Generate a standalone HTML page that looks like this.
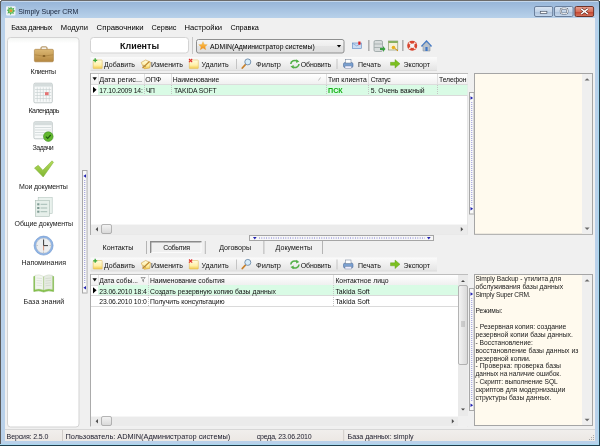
<!DOCTYPE html>
<html><head><meta charset="utf-8"><style>
html,body{margin:0;padding:0;width:600px;height:446px;overflow:hidden;background:#f0f0f0}
svg{display:block;font-family:"Liberation Sans",sans-serif;will-change:transform}
</style></head><body>
<svg width="600" height="446" viewBox="0 0 600 446">
<defs>
<linearGradient id="gTitle" x1="0" y1="0" x2="0" y2="1">
 <stop offset="0" stop-color="#94b3d7"/><stop offset="1" stop-color="#b8d1ea"/></linearGradient>
<linearGradient id="gTool" x1="0" y1="0" x2="0" y2="1">
 <stop offset="0" stop-color="#fbfbfb"/><stop offset="1" stop-color="#e4e4e4"/></linearGradient>
<linearGradient id="gHead" x1="0" y1="0" x2="0" y2="1">
 <stop offset="0" stop-color="#ffffff"/><stop offset="1" stop-color="#f0f0f0"/></linearGradient>
<linearGradient id="gBtn" x1="0" y1="0" x2="0" y2="1">
 <stop offset="0" stop-color="#dbe6f3"/><stop offset="0.5" stop-color="#c3d4e8"/><stop offset="0.5" stop-color="#a9bfd9"/><stop offset="1" stop-color="#c9daee"/></linearGradient>
<linearGradient id="gClose" x1="0" y1="0" x2="0" y2="1">
 <stop offset="0" stop-color="#e8a393"/><stop offset="0.5" stop-color="#d7705a"/><stop offset="0.5" stop-color="#c4402b"/><stop offset="1" stop-color="#d4765f"/></linearGradient>
<linearGradient id="gBrief" x1="0" y1="0" x2="0" y2="1">
 <stop offset="0" stop-color="#dcb874"/><stop offset="1" stop-color="#b5873f"/></linearGradient>
<linearGradient id="gFolder" x1="0" y1="0" x2="0" y2="1">
 <stop offset="0" stop-color="#fffce0"/><stop offset="0.6" stop-color="#fff0a8"/><stop offset="1" stop-color="#f2c848"/></linearGradient>
<linearGradient id="gThumbH" x1="0" y1="0" x2="0" y2="1">
 <stop offset="0" stop-color="#f4f4f4"/><stop offset="1" stop-color="#d8d8d8"/></linearGradient>
<linearGradient id="gThumbV" x1="0" y1="0" x2="1" y2="0">
 <stop offset="0" stop-color="#f4f4f4"/><stop offset="1" stop-color="#d8d8d8"/></linearGradient>
<linearGradient id="gCheck" x1="0" y1="0" x2="0" y2="1">
 <stop offset="0" stop-color="#b4dc5a"/><stop offset="1" stop-color="#80b632"/></linearGradient>
<linearGradient id="gCombo" x1="0" y1="0" x2="0" y2="1">
 <stop offset="0" stop-color="#f6f6f6"/><stop offset="0.5" stop-color="#ededed"/><stop offset="0.5" stop-color="#e4e4e4"/><stop offset="1" stop-color="#dedede"/></linearGradient>
<linearGradient id="gStar" x1="0" y1="0" x2="0" y2="1">
 <stop offset="0" stop-color="#ffd060"/><stop offset="1" stop-color="#f08a10"/></linearGradient>
<linearGradient id="gPanel" x1="0" y1="0" x2="0" y2="389.5" gradientUnits="userSpaceOnUse" gradientTransform="translate(0,37.5)">
 <stop offset="0" stop-color="#f3f5f3"/><stop offset="0.015" stop-color="#ffffff"/><stop offset="1" stop-color="#ffffff"/></linearGradient>
<linearGradient id="gStatus" x1="0" y1="0" x2="0" y2="1">
 <stop offset="0" stop-color="#f1efed"/><stop offset="1" stop-color="#ece8e4"/></linearGradient>
</defs>
<rect x="0" y="0" width="600" height="446" fill="#b9d1ea" stroke="none" stroke-width="1" rx="0" />
<rect x="0" y="0" width="600" height="18" fill="url(#gTitle)" stroke="none" stroke-width="1" rx="0" />
<line x1="0" y1="0.5" x2="600" y2="0.5" stroke="#6c6c6c" stroke-width="1" />
<line x1="0.5" y1="0" x2="0.5" y2="446" stroke="#5c5c5c" stroke-width="1" />
<line x1="598.5" y1="20" x2="598.5" y2="445" stroke="#a8d8f0" stroke-width="1" />
<line x1="0" y1="444.5" x2="600" y2="444.5" stroke="#a8d8f0" stroke-width="1" />
<line x1="599.5" y1="0" x2="599.5" y2="446" stroke="#28414f" stroke-width="1" />
<line x1="0" y1="445.5" x2="600" y2="445.5" stroke="#1f3d4c" stroke-width="1" />
<line x1="1" y1="1.5" x2="599" y2="1.5" stroke="#c4d7ec" stroke-width="1" />
<rect x="0" y="0" width="1" height="1" fill="#ffffff" stroke="none" stroke-width="1" rx="0" />
<rect x="599" y="0" width="1" height="1" fill="#ffffff" stroke="none" stroke-width="1" rx="0" />
<rect x="1" y="1" width="1" height="1" fill="#8a9aaa" stroke="none" stroke-width="1" rx="0" />
<rect x="598" y="1" width="1" height="1" fill="#8a9aaa" stroke="none" stroke-width="1" rx="0" />
<rect x="5" y="18" width="590" height="423" fill="#f0f0f0" stroke="none" stroke-width="1" rx="0" />
<rect x="6" y="6.2" width="9.5" height="9.2" fill="#eef3f8" stroke="none" stroke-width="1" rx="1" />
<g transform="translate(11,10.7)"><path d="M0,-4.2 L1.2,-2.3 3.4,-3 2.6,-1 4.3,0.3 2.4,1.2 2.8,3.4 0.8,2.6 -0.6,4.3 -1.4,2.4 -3.6,2.8 -2.7,0.9 -4.3,-0.6 -2.4,-1.5 -3,-3.5 -0.9,-2.6 Z" fill="#4fae52"/><circle r="2.2" fill="#8ccd6a"/><circle r="1.3" fill="#e8912e"/></g>
<text x="18.3" y="14.3" font-size="7.06" fill="#18243a" font-weight="normal" text-anchor="start" textLength="60" lengthAdjust="spacing">Simply Super CRM</text>
<rect x="534.5" y="6.5" width="18.2" height="10" fill="url(#gBtn)" stroke="#6a7f9c" stroke-width="1" rx="1.5" />
<rect x="540.3" y="11.3" width="6.6" height="2.3" fill="#fbfbfb" stroke="#4a5566" stroke-width="0.7" rx="0" />
<rect x="554.5" y="6.5" width="18.6" height="10" fill="url(#gBtn)" stroke="#6a7f9c" stroke-width="1" rx="1.5" />
<rect x="560.8" y="8.6" width="6.6" height="5" fill="none" stroke="#4a5566" stroke-width="1.9" rx="1.5" />
<rect x="560.8" y="8.6" width="6.6" height="5" fill="none" stroke="#f4f4f4" stroke-width="1" rx="1.5" />
<rect x="575" y="6.5" width="18.6" height="10" fill="url(#gClose)" stroke="#6e3228" stroke-width="1" rx="1.5" />
<path d="M581.2,8.8 L587.8,14 M587.8,8.8 L581.2,14" stroke="#5a2a22" stroke-width="2.6"/>
<path d="M581.2,8.8 L587.8,14 M587.8,8.8 L581.2,14" stroke="#fff" stroke-width="1.5"/>
<text x="11.3" y="29.8" font-size="7.3" fill="#000" font-weight="normal" text-anchor="start" textLength="41.2" lengthAdjust="spacing">База данных</text>
<text x="60.8" y="29.8" font-size="7.59" fill="#000" font-weight="normal" text-anchor="start" textLength="27.2" lengthAdjust="spacing">Модули</text>
<text x="96.6" y="29.8" font-size="7.76" fill="#000" font-weight="normal" text-anchor="start" textLength="47" lengthAdjust="spacing">Справочники</text>
<text x="151.5" y="29.8" font-size="7.3" fill="#000" font-weight="normal" text-anchor="start" textLength="25" lengthAdjust="spacing">Сервис</text>
<text x="184.6" y="29.8" font-size="7.63" fill="#000" font-weight="normal" text-anchor="start" textLength="37.4" lengthAdjust="spacing">Настройки</text>
<text x="230.5" y="29.8" font-size="7.3" fill="#000" font-weight="normal" text-anchor="start" textLength="28.3" lengthAdjust="spacing">Справка</text>
<rect x="7.5" y="37.5" width="71.5" height="389.5" fill="url(#gPanel)" stroke="#d3d3d3" stroke-width="1" rx="3" />
<g><path d="M41,49.5 v-1.6 q0,-1 1,-1 h4 q1,0 1,1 v1.6" fill="none" stroke="#9c7434" stroke-width="0.9"/><rect x="34.4" y="49.3" width="19" height="12.5" rx="1.2" fill="url(#gBrief)" stroke="#a47b3a" stroke-width="0.6"/><path d="M34.6,54.8 Q43.9,57.5 53.2,54.8" fill="none" stroke="#a27a38" stroke-width="0.6"/><rect x="42.8" y="55" width="2.4" height="2" fill="#8a6428"/></g>
<g><rect x="33.9" y="83.2" width="18.4" height="19.6" rx="1.2" fill="#f7f9f9" stroke="#aab6b6" stroke-width="0.7"/><rect x="34.3" y="83.6" width="17.6" height="3" fill="#d5dcdc"/><line x1="37.3" y1="87.5" x2="37.3" y2="101.5" stroke="#c5cece" stroke-width="0.6"/><line x1="40.3" y1="87.5" x2="40.3" y2="101.5" stroke="#c5cece" stroke-width="0.6"/><line x1="43.3" y1="87.5" x2="43.3" y2="101.5" stroke="#c5cece" stroke-width="0.6"/><line x1="46.3" y1="87.5" x2="46.3" y2="101.5" stroke="#c5cece" stroke-width="0.6"/><line x1="49.3" y1="87.5" x2="49.3" y2="101.5" stroke="#c5cece" stroke-width="0.6"/><line x1="35" y1="89.5" x2="51.2" y2="89.5" stroke="#c5cece" stroke-width="0.6"/><line x1="35" y1="92.5" x2="51.2" y2="92.5" stroke="#c5cece" stroke-width="0.6"/><line x1="35" y1="95.5" x2="51.2" y2="95.5" stroke="#c5cece" stroke-width="0.6"/><line x1="35" y1="98.5" x2="51.2" y2="98.5" stroke="#c5cece" stroke-width="0.6"/><rect x="45" y="92.2" width="3.6" height="3" fill="#e57272"/></g>
<g><rect x="33.9" y="121.8" width="18.4" height="17" rx="1.2" fill="#f7f9f9" stroke="#aab6b6" stroke-width="0.7"/><rect x="34.3" y="122.2" width="17.6" height="3" fill="#d5dcdc"/><line x1="35.5" y1="127.5" x2="50.5" y2="127.5" stroke="#8c9a9e" stroke-width="0.6" stroke-dasharray="1 1"/><line x1="35.5" y1="130.0" x2="50.5" y2="130.0" stroke="#8c9a9e" stroke-width="0.6" stroke-dasharray="1 1"/><line x1="35.5" y1="132.5" x2="50.5" y2="132.5" stroke="#8c9a9e" stroke-width="0.6" stroke-dasharray="1 1"/><line x1="35.5" y1="135.0" x2="50.5" y2="135.0" stroke="#8c9a9e" stroke-width="0.6" stroke-dasharray="1 1"/><circle cx="48.3" cy="136.6" r="4.8" fill="#62b82e" stroke="#3d8a22" stroke-width="0.6"/><path d="M45.9,136.6 l1.8,1.8 l3,-3.4" fill="none" stroke="#1f5a10" stroke-width="1.2"/></g>
<path d="M34.5,168 L38.2,165.3 L42.8,170.2 L52,160.8 L53.5,162.3 L43.2,177 Z" fill="url(#gCheck)" stroke="#78a830" stroke-width="0.5" stroke-linejoin="round"/>
<g><rect x="38.2" y="197.6" width="14" height="15.8" fill="#eaf2ee" stroke="#b4c6bf" stroke-width="0.6"/><rect x="35.3" y="200.3" width="14.2" height="16" fill="#e6efea" stroke="#aabdb5" stroke-width="0.6"/><rect x="37.2" y="203.3" width="2.2" height="2" fill="#7d9a92"/><line x1="40.6" y1="204.3" x2="47.2" y2="204.3" stroke="#8aa69e" stroke-width="0.7"/><rect x="37.2" y="207.0" width="2.2" height="2" fill="#7d9a92"/><line x1="40.6" y1="208.0" x2="47.2" y2="208.0" stroke="#8aa69e" stroke-width="0.7"/><rect x="37.2" y="210.70000000000002" width="2.2" height="2" fill="#7d9a92"/><line x1="40.6" y1="211.70000000000002" x2="47.2" y2="211.70000000000002" stroke="#8aa69e" stroke-width="0.7"/></g>
<g><circle cx="43.6" cy="245.6" r="9.5" fill="#8fb4e6" stroke="#6a94cc" stroke-width="0.6"/><circle cx="43.6" cy="245.6" r="7.6" fill="#eceef0" stroke="#a8b0b8" stroke-width="0.4"/><path d="M43.6,239.5 V245.6 H48" fill="none" stroke="#222" stroke-width="0.9"/><line x1="43.6" y1="245.6" x2="43.6" y2="250.5" stroke="#c0502a" stroke-width="0.6"/><g fill="#888"><rect x="43.3" y="238.6" width="0.6" height="1"/><rect x="43.3" y="251.6" width="0.6" height="1"/><rect x="36.6" y="245.3" width="1" height="0.6"/><rect x="49.6" y="245.3" width="1" height="0.6"/></g></g>
<g><path d="M33.8,276.5 Q38.8,274.8 43.7,277 Q48.6,274.8 53.6,276.5 V291.5 Q48.6,290 43.7,292 Q38.8,290 33.8,291.5 Z" fill="#86c24a" stroke="#6aa838" stroke-width="0.5"/><path d="M35,275.3 Q39.3,273.8 43.4,276.3 V290 Q39.3,288.3 35,289.4 Z" fill="#f2f5ef" stroke="#c8d4bc" stroke-width="0.4"/><path d="M52.4,275.3 Q48.1,273.8 44,276.3 V290 Q48.1,288.3 52.4,289.4 Z" fill="#e6ebe2" stroke="#c8d4bc" stroke-width="0.4"/><line x1="36.5" y1="278.0" x2="42" y2="278.6" stroke="#cdd6c6" stroke-width="0.5"/><line x1="45.4" y1="278.6" x2="51" y2="278.0" stroke="#c4cdbc" stroke-width="0.5"/><line x1="36.5" y1="280.4" x2="42" y2="281.0" stroke="#cdd6c6" stroke-width="0.5"/><line x1="45.4" y1="281.0" x2="51" y2="280.4" stroke="#c4cdbc" stroke-width="0.5"/><line x1="36.5" y1="282.8" x2="42" y2="283.40000000000003" stroke="#cdd6c6" stroke-width="0.5"/><line x1="45.4" y1="283.40000000000003" x2="51" y2="282.8" stroke="#c4cdbc" stroke-width="0.5"/><line x1="36.5" y1="285.2" x2="42" y2="285.8" stroke="#cdd6c6" stroke-width="0.5"/><line x1="45.4" y1="285.8" x2="51" y2="285.2" stroke="#c4cdbc" stroke-width="0.5"/></g>
<text x="30.6" y="73.5" font-size="7.0" fill="#1a1a1a" font-weight="normal" text-anchor="start" textLength="25.4" lengthAdjust="spacing">Клиенты</text>
<text x="28.5" y="112.8" font-size="7.0" fill="#1a1a1a" font-weight="normal" text-anchor="start" textLength="31" lengthAdjust="spacing">Календарь</text>
<text x="32.6" y="150.3" font-size="7.0" fill="#1a1a1a" font-weight="normal" text-anchor="start" textLength="21" lengthAdjust="spacing">Задачи</text>
<text x="19" y="188.5" font-size="7.0" fill="#1a1a1a" font-weight="normal" text-anchor="start" textLength="48.8" lengthAdjust="spacing">Мои документы</text>
<text x="14.6" y="226" font-size="7.0" fill="#1a1a1a" font-weight="normal" text-anchor="start" textLength="58.4" lengthAdjust="spacing">Общие документы</text>
<text x="21.5" y="265" font-size="7.0" fill="#1a1a1a" font-weight="normal" text-anchor="start" textLength="44.5" lengthAdjust="spacing">Напоминания</text>
<text x="23.6" y="303.5" font-size="7.1" fill="#1a1a1a" font-weight="normal" text-anchor="start" textLength="40.7" lengthAdjust="spacing">База знаний</text>
<rect x="82.5" y="170.5" width="4.5" height="122.5" fill="#f9f9f9" stroke="#a8a8a8" stroke-width="1" rx="0" />
<line x1="86.5" y1="171" x2="86.5" y2="292.5" stroke="#d8d8d8" stroke-width="1" />
<line x1="84.75" y1="180" x2="84.75" y2="283.5" stroke="#4040c0" stroke-width="0.8" stroke-dasharray="0.7 1.3"/>
<path d="M86,174.2 l-2.6,1.8 l2.6,1.8 z" fill="#2020b0"/>
<path d="M86,285.9 l-2.6,1.8 l2.6,1.8 z" fill="#2020b0"/>
<rect x="90.5" y="37.5" width="98" height="15.5" fill="#ffffff" stroke="#d3d3d3" stroke-width="1" rx="3" />
<text x="120" y="49" font-size="8.94" fill="#111" font-weight="bold" text-anchor="start" textLength="39" lengthAdjust="spacing">Клиенты</text>
<line x1="192.5" y1="37" x2="192.5" y2="54" stroke="#c8c8c8" stroke-width="1" />
<rect x="196.5" y="39.5" width="147.5" height="13.5" fill="url(#gCombo)" stroke="#8e8f8f" stroke-width="1" rx="2" />
<path d="M203,41.6 l1.25,2.85 3.05,0.25 -2.3,2 0.75,3 -2.75,-1.65 -2.75,1.65 0.75,-3 -2.3,-2 3.05,-0.25 z" fill="url(#gStar)" stroke="#e09a30" stroke-width="0.3"/>
<text x="210" y="49.2" font-size="6.82" fill="#000" font-weight="normal" text-anchor="start" textLength="104.7" lengthAdjust="spacing">ADMIN(Администратор системы)</text>
<path d="M336.8,45 h4.4 l-2.2,2.4 z" fill="#000"/>
<rect x="352.3" y="43" width="9" height="5.6" fill="#c9dcf2" stroke="#5a86c0" stroke-width="0.6" rx="0" />
<path d="M352.5,43.3 L356.8,46 L361,43.3" fill="none" stroke="#5a86c0" stroke-width="0.5"/>
<rect x="358.3" y="41.5" width="2.2" height="3.2" fill="#e02020" stroke="none" stroke-width="1" rx="0" />
<line x1="368.8" y1="40" x2="368.8" y2="51" stroke="#b0b0b0" stroke-width="1.6" />
<g><rect x="374" y="40.5" width="8.5" height="11" rx="1.5" fill="#d8dcdc" stroke="#7c8a8a" stroke-width="0.6"/><line x1="374.3" y1="44" x2="382.2" y2="44" stroke="#7c8a8a" stroke-width="0.5"/><line x1="374.3" y1="47.5" x2="382.2" y2="47.5" stroke="#7c8a8a" stroke-width="0.5"/><path d="M380,48 h3 v-2 l2.5,3 -2.5,3 v-2 h-3 z" fill="#3aa040"/></g>
<g><rect x="388.3" y="41" width="9.5" height="9" fill="#f6f1d8" stroke="#7c8a6a" stroke-width="0.6"/><rect x="388.3" y="41" width="9.5" height="2" fill="#88b060"/><circle cx="393.5" cy="47.5" r="1.8" fill="#e8b020"/><line x1="395" y1="48.5" x2="398" y2="51" stroke="#d09010" stroke-width="1"/></g>
<line x1="402.8" y1="40" x2="402.8" y2="51" stroke="#b0b0b0" stroke-width="1.6" />
<g><circle cx="412.2" cy="45.8" r="5" fill="#d8452f"/><circle cx="412.2" cy="45.8" r="2.3" fill="#f4f4f4"/><path d="M409,42.6 l1.7,1.7 M415.4,42.6 l-1.7,1.7 M409,49 l1.7,-1.7 M415.4,49 l-1.7,-1.7" stroke="#f8e8e0" stroke-width="1.5"/></g>
<g><path d="M421.5,46.5 L426.5,41 L431.5,46.5" fill="none" stroke="#3f78c8" stroke-width="1.5"/><path d="M423,45.5 L426.5,42 L430,45.5 V51 H423 Z" fill="#b9c2cc" stroke="#7f8a96" stroke-width="0.5"/><rect x="425.4" y="47" width="2.2" height="4" fill="#3f78c8"/></g>
<rect x="90.5" y="57" width="346.5" height="13.5" fill="url(#gTool)" stroke="none" stroke-width="1" rx="0" />
<line x1="90.5" y1="70.5" x2="437" y2="70.5" stroke="#dcdcdc" stroke-width="1" />
<rect x="93.2" y="60" width="9" height="8.6" rx="0.6" fill="url(#gFolder)" stroke="#e2c060" stroke-width="0.6"/><path d="M93.2,60.3 h4 M95.2,58.3 v4" stroke="#3aa83a" stroke-width="1.3"/>
<path d="M141.2,62.5 l4.5,-2.5 l4.8,2.2 l-0.8,5.8 l-5.5,0.8 z" fill="url(#gFolder)" stroke="#d0a040" stroke-width="0.6"/><path d="M142.5,68 l7,-6.5" stroke="#c08a30" stroke-width="1.2"/><path d="M143,65 l3,2" stroke="#9a7a50" stroke-width="0.6"/>
<rect x="189.3" y="60" width="9" height="8.6" rx="0.6" fill="url(#gFolder)" stroke="#e2c060" stroke-width="0.6"/><path d="M189,59 l3.2,3.2 M192.2,59 l-3.2,3.2" stroke="#e03030" stroke-width="1.1"/>
<line x1="236.5" y1="59" x2="236.5" y2="69" stroke="#c4c4c4" stroke-width="1" />
<line x1="245.5" y1="64.5" x2="242.3" y2="68" stroke="#c8802a" stroke-width="1.8" stroke-linecap="round"/><circle cx="247.8" cy="61.9" r="3" fill="#d6ecfa" stroke="#6c8aa8" stroke-width="0.9"/>
<g fill="none" stroke="#55b04a" stroke-width="1.6"><path d="M290.8,64 A4.2,3.6 0 0 1 297.5,61.2"/><path d="M299,64 A4.2,3.6 0 0 1 292.3,66.8"/></g><path d="M296.3,59.2 l3,2.2 l-3.2,1.6 z M293.5,68.8 l-3,-2.2 l3.2,-1.6 z" fill="#55b04a"/>
<line x1="337" y1="59" x2="337" y2="69" stroke="#c4c4c4" stroke-width="1" />
<g><rect x="343.5" y="62.5" width="9.5" height="5" rx="1.5" fill="#7aa0d0" stroke="#3a5a90" stroke-width="0.5"/><rect x="345.5" y="59.5" width="5.5" height="3.5" fill="#fff" stroke="#6a7a90" stroke-width="0.5"/><rect x="345" y="66" width="6.5" height="2.5" fill="#eef" stroke="#6a7a90" stroke-width="0.4"/></g>
<path d="M390.5,62.3 h4.5 v-2.8 l5,4.3 l-5,4.3 v-2.8 h-4.5 z" fill="#7cc020" stroke="#5a9a10" stroke-width="0.4"/>
<text x="104" y="67" font-size="7.01" fill="#111" font-weight="normal" text-anchor="start" textLength="31" lengthAdjust="spacing">Добавить</text>
<text x="151" y="67" font-size="7.09" fill="#111" font-weight="normal" text-anchor="start" textLength="32" lengthAdjust="spacing">Изменить</text>
<text x="201.6" y="67" font-size="7.07" fill="#111" font-weight="normal" text-anchor="start" textLength="27" lengthAdjust="spacing">Удалить</text>
<text x="256" y="67" font-size="7.44" fill="#111" font-weight="normal" text-anchor="start" textLength="25" lengthAdjust="spacing">Фильтр</text>
<text x="300.8" y="67" font-size="7.0" fill="#111" font-weight="normal" text-anchor="start" textLength="30.4" lengthAdjust="spacing">Обновить</text>
<text x="358" y="67" font-size="7.0" fill="#111" font-weight="normal" text-anchor="start" textLength="22.8" lengthAdjust="spacing">Печать</text>
<text x="403.5" y="67" font-size="7.05" fill="#111" font-weight="normal" text-anchor="start" textLength="26.5" lengthAdjust="spacing">Экспорт</text>
<rect x="90.5" y="257.5" width="346.5" height="13.5" fill="url(#gTool)" stroke="none" stroke-width="1" rx="0" />
<line x1="90.5" y1="271.0" x2="437" y2="271.0" stroke="#dcdcdc" stroke-width="1" />
<rect x="93.2" y="260.5" width="9" height="8.6" rx="0.6" fill="url(#gFolder)" stroke="#e2c060" stroke-width="0.6"/><path d="M93.2,260.8 h4 M95.2,258.8 v4" stroke="#3aa83a" stroke-width="1.3"/>
<path d="M141.2,263.0 l4.5,-2.5 l4.8,2.2 l-0.8,5.8 l-5.5,0.8 z" fill="url(#gFolder)" stroke="#d0a040" stroke-width="0.6"/><path d="M142.5,268.5 l7,-6.5" stroke="#c08a30" stroke-width="1.2"/><path d="M143,265.5 l3,2" stroke="#9a7a50" stroke-width="0.6"/>
<rect x="189.3" y="260.5" width="9" height="8.6" rx="0.6" fill="url(#gFolder)" stroke="#e2c060" stroke-width="0.6"/><path d="M189,259.5 l3.2,3.2 M192.2,259.5 l-3.2,3.2" stroke="#e03030" stroke-width="1.1"/>
<line x1="236.5" y1="259.5" x2="236.5" y2="269.5" stroke="#c4c4c4" stroke-width="1" />
<line x1="245.5" y1="265.0" x2="242.3" y2="268.5" stroke="#c8802a" stroke-width="1.8" stroke-linecap="round"/><circle cx="247.8" cy="262.4" r="3" fill="#d6ecfa" stroke="#6c8aa8" stroke-width="0.9"/>
<g fill="none" stroke="#55b04a" stroke-width="1.6"><path d="M290.8,264.5 A4.2,3.6 0 0 1 297.5,261.7"/><path d="M299,264.5 A4.2,3.6 0 0 1 292.3,267.3"/></g><path d="M296.3,259.7 l3,2.2 l-3.2,1.6 z M293.5,269.3 l-3,-2.2 l3.2,-1.6 z" fill="#55b04a"/>
<line x1="337" y1="259.5" x2="337" y2="269.5" stroke="#c4c4c4" stroke-width="1" />
<g><rect x="343.5" y="263.0" width="9.5" height="5" rx="1.5" fill="#7aa0d0" stroke="#3a5a90" stroke-width="0.5"/><rect x="345.5" y="260.0" width="5.5" height="3.5" fill="#fff" stroke="#6a7a90" stroke-width="0.5"/><rect x="345" y="266.5" width="6.5" height="2.5" fill="#eef" stroke="#6a7a90" stroke-width="0.4"/></g>
<path d="M390.5,262.8 h4.5 v-2.8 l5,4.3 l-5,4.3 v-2.8 h-4.5 z" fill="#7cc020" stroke="#5a9a10" stroke-width="0.4"/>
<text x="104" y="267.5" font-size="7.01" fill="#111" font-weight="normal" text-anchor="start" textLength="31" lengthAdjust="spacing">Добавить</text>
<text x="151" y="267.5" font-size="7.09" fill="#111" font-weight="normal" text-anchor="start" textLength="32" lengthAdjust="spacing">Изменить</text>
<text x="201.6" y="267.5" font-size="7.07" fill="#111" font-weight="normal" text-anchor="start" textLength="27" lengthAdjust="spacing">Удалить</text>
<text x="256" y="267.5" font-size="7.44" fill="#111" font-weight="normal" text-anchor="start" textLength="25" lengthAdjust="spacing">Фильтр</text>
<text x="300.8" y="267.5" font-size="7.0" fill="#111" font-weight="normal" text-anchor="start" textLength="30.4" lengthAdjust="spacing">Обновить</text>
<text x="358" y="267.5" font-size="7.0" fill="#111" font-weight="normal" text-anchor="start" textLength="22.8" lengthAdjust="spacing">Печать</text>
<text x="403.5" y="267.5" font-size="7.05" fill="#111" font-weight="normal" text-anchor="start" textLength="26.5" lengthAdjust="spacing">Экспорт</text>
<rect x="90" y="73" width="378" height="162" fill="#ffffff" stroke="none" stroke-width="1" rx="0" />
<line x1="90" y1="73.5" x2="468" y2="73.5" stroke="#bdbdbd" stroke-width="1" />
<line x1="90.5" y1="73" x2="90.5" y2="235" stroke="#ababab" stroke-width="1" />
<line x1="467.5" y1="74" x2="467.5" y2="235" stroke="#e6e6e6" stroke-width="1" />
<line x1="91" y1="234.5" x2="468" y2="234.5" stroke="#e9e9e9" stroke-width="1" />
<rect x="91" y="74" width="376.5" height="10" fill="url(#gHead)" stroke="none" stroke-width="1" rx="0" />
<line x1="91" y1="84.5" x2="467.5" y2="84.5" stroke="#dcdcdc" stroke-width="1" />
<path d="M92.5,77.3 h4.4 l-2.2,3.3 z" fill="#111"/>
<line x1="98.5" y1="74" x2="98.5" y2="84" stroke="#e6e6e6" stroke-width="1" />
<line x1="144.5" y1="74" x2="144.5" y2="84" stroke="#e0e0e0" stroke-width="1" />
<line x1="171.5" y1="74" x2="171.5" y2="84" stroke="#e0e0e0" stroke-width="1" />
<line x1="326.5" y1="74" x2="326.5" y2="84" stroke="#e0e0e0" stroke-width="1" />
<line x1="368.5" y1="74" x2="368.5" y2="84" stroke="#e0e0e0" stroke-width="1" />
<line x1="437.5" y1="74" x2="437.5" y2="84" stroke="#e0e0e0" stroke-width="1" />
<text x="99.3" y="82.2" font-size="7.29" fill="#111" font-weight="normal" text-anchor="start" textLength="42.7" lengthAdjust="spacing">Дата регис...</text>
<text x="145.2" y="82.2" font-size="7.09" fill="#111" font-weight="normal" text-anchor="start" textLength="16" lengthAdjust="spacing">ОПФ</text>
<text x="172.7" y="82.2" font-size="6.8" fill="#111" font-weight="normal" text-anchor="start" textLength="46.6" lengthAdjust="spacing">Наименование</text>
<text x="328" y="82.2" font-size="6.85" fill="#111" font-weight="normal" text-anchor="start" textLength="38.7" lengthAdjust="spacing">Тип клиента</text>
<text x="370.7" y="82.2" font-size="6.8" fill="#111" font-weight="normal" text-anchor="start" textLength="20" lengthAdjust="spacing">Статус</text>
<text x="439" y="82.2" font-size="6.8" fill="#111" font-weight="normal" text-anchor="start" textLength="27.4" lengthAdjust="spacing">Телефон</text>
<path d="M318.5,80.5 l2,-3" stroke="#999" stroke-width="0.6"/>
<rect x="98" y="85" width="369.5" height="10" fill="#d9fbe5" stroke="none" stroke-width="1" rx="0" />
<line x1="91" y1="95.5" x2="467.5" y2="95.5" stroke="#dadada" stroke-width="1" />
<line x1="144.5" y1="85" x2="144.5" y2="95" stroke="#c4c4c4" stroke-width="1" stroke-dasharray="1 1"/>
<line x1="171.5" y1="85" x2="171.5" y2="95" stroke="#c4c4c4" stroke-width="1" stroke-dasharray="1 1"/>
<line x1="326.5" y1="85" x2="326.5" y2="95" stroke="#c4c4c4" stroke-width="1" stroke-dasharray="1 1"/>
<line x1="368.5" y1="85" x2="368.5" y2="95" stroke="#c4c4c4" stroke-width="1" stroke-dasharray="1 1"/>
<line x1="437.5" y1="85" x2="437.5" y2="95" stroke="#c4c4c4" stroke-width="1" stroke-dasharray="1 1"/>
<path d="M93,86.7 v6.2 l3.6,-3.1 z" fill="#000"/>
<text x="99.3" y="92.6" font-size="6.8" fill="#111" font-weight="normal" text-anchor="start" textLength="43.5" lengthAdjust="spacing">17.10.2009 14:</text>
<text x="146" y="92.6" font-size="6.8" fill="#111" font-weight="normal" text-anchor="start" textLength="8.8" lengthAdjust="spacing">ЧП</text>
<text x="174" y="92.6" font-size="6.8" fill="#111" font-weight="normal" text-anchor="start" textLength="42.7" lengthAdjust="spacing">TAKIDA SOFT</text>
<text x="370.7" y="92.6" font-size="6.84" fill="#111" font-weight="normal" text-anchor="start" textLength="54" lengthAdjust="spacing">5. Очень важный</text>
<text x="328" y="92.6" font-size="7.17" fill="#12b012" font-weight="bold" text-anchor="start" textLength="14.7" lengthAdjust="spacing">ПСК</text>
<rect x="91" y="224" width="376" height="10" fill="#ebebeb" stroke="none" stroke-width="1" rx="0" />
<line x1="91" y1="224.5" x2="467" y2="224.5" stroke="#f6f6f6" stroke-width="1" />
<path d="M95.6,229.2 l2.4,-2.2 v4.4 z" fill="#505050"/>
<path d="M463.2,229.2 l-2.4,-2.2 v4.4 z" fill="#505050"/>
<rect x="101.5" y="224.5" width="10" height="9" fill="url(#gThumbH)" stroke="#9a9a9a" stroke-width="0.7" rx="1.5" />
<rect x="474.5" y="73.5" width="118" height="160.8" fill="#fffaee" stroke="#a5a5a5" stroke-width="1" rx="0" />
<rect x="582" y="74" width="10" height="159.8" fill="#efefef" stroke="none" stroke-width="1" rx="0" />
<path d="M584.6,80.6 l2.5,-2.4 l2.5,2.4 z" fill="#6a6a6a"/>
<path d="M584.6,227.60000000000002 l2.5,2.4 l2.5,-2.4 z" fill="#6a6a6a"/>
<rect x="474.5" y="274.5" width="118" height="151" fill="#fffaee" stroke="#a5a5a5" stroke-width="1" rx="0" />
<rect x="582" y="275" width="10" height="150" fill="#efefef" stroke="none" stroke-width="1" rx="0" />
<path d="M584.6,281.6 l2.5,-2.4 l2.5,2.4 z" fill="#6a6a6a"/>
<path d="M584.6,418.8 l2.5,2.4 l2.5,-2.4 z" fill="#6a6a6a"/>
<rect x="469.5" y="92.5" width="4.5" height="121.5" fill="#f9f9f9" stroke="#a8a8a8" stroke-width="1" rx="0" />
<line x1="473.5" y1="93" x2="473.5" y2="213.5" stroke="#d8d8d8" stroke-width="1" />
<line x1="471.75" y1="102" x2="471.75" y2="204.5" stroke="#4040c0" stroke-width="0.8" stroke-dasharray="0.7 1.3"/>
<path d="M470.5,96.2 l2.6,1.8 l-2.6,1.8 z" fill="#2020b0"/>
<path d="M470.5,206.9 l2.6,1.8 l-2.6,1.8 z" fill="#2020b0"/>
<rect x="469.5" y="288.5" width="4.5" height="122" fill="#f9f9f9" stroke="#a8a8a8" stroke-width="1" rx="0" />
<line x1="473.5" y1="289" x2="473.5" y2="410" stroke="#d8d8d8" stroke-width="1" />
<line x1="471.75" y1="298" x2="471.75" y2="401" stroke="#4040c0" stroke-width="0.8" stroke-dasharray="0.7 1.3"/>
<path d="M470.5,292.2 l2.6,1.8 l-2.6,1.8 z" fill="#2020b0"/>
<path d="M470.5,403.4 l2.6,1.8 l-2.6,1.8 z" fill="#2020b0"/>
<rect x="249.5" y="235.5" width="184" height="5" fill="#f7f7f7" stroke="#a5a5a5" stroke-width="1" rx="0" />
<line x1="259" y1="238" x2="425" y2="238" stroke="#3a3ac0" stroke-width="0.8" stroke-dasharray="0.8 1.6"/>
<path d="M253,237 l1.8,2.5 l1.8,-2.5 z" fill="#2020b0"/>
<path d="M427,237 l1.8,2.5 l1.8,-2.5 z" fill="#2020b0"/>
<rect x="150" y="241" width="51.5" height="12" fill="#f0f0f0" stroke="none" stroke-width="1" rx="0" />
<path d="M150.7,253 V241.7 H201.5" fill="none" stroke="#8a8a8a" stroke-width="1.4"/>
<path d="M151.5,252.5 H201 V242.5" fill="none" stroke="#fbfbfb" stroke-width="1"/>
<line x1="146.5" y1="241" x2="146.5" y2="254" stroke="#b4b4b4" stroke-width="1" />
<line x1="205.3" y1="241" x2="205.3" y2="254" stroke="#b4b4b4" stroke-width="1" />
<line x1="263.9" y1="241" x2="263.9" y2="254" stroke="#b4b4b4" stroke-width="1" />
<line x1="322.5" y1="241" x2="322.5" y2="254" stroke="#b4b4b4" stroke-width="1" />
<text x="102.5" y="250.3" font-size="7.18" fill="#111" font-weight="normal" text-anchor="start" textLength="31" lengthAdjust="spacing">Контакты</text>
<text x="163.3" y="250.3" font-size="7.0" fill="#111" font-weight="normal" text-anchor="start" textLength="26.7" lengthAdjust="spacing">События</text>
<text x="219.2" y="250.3" font-size="7.08" fill="#111" font-weight="normal" text-anchor="start" textLength="31.8" lengthAdjust="spacing">Договоры</text>
<text x="275.6" y="250.3" font-size="7.06" fill="#111" font-weight="normal" text-anchor="start" textLength="36.4" lengthAdjust="spacing">Документы</text>
<rect x="90" y="274" width="378" height="152.5" fill="#ffffff" stroke="none" stroke-width="1" rx="0" />
<line x1="90" y1="274.5" x2="468" y2="274.5" stroke="#bdbdbd" stroke-width="1" />
<line x1="90.5" y1="274" x2="90.5" y2="426.5" stroke="#ababab" stroke-width="1" />
<line x1="467.5" y1="275" x2="467.5" y2="426.5" stroke="#e6e6e6" stroke-width="1" />
<line x1="91" y1="426.0" x2="468" y2="426.0" stroke="#e9e9e9" stroke-width="1" />
<rect x="91" y="275" width="376.5" height="10" fill="url(#gHead)" stroke="none" stroke-width="1" rx="0" />
<line x1="91" y1="285.5" x2="467.5" y2="285.5" stroke="#dcdcdc" stroke-width="1" />
<path d="M92.5,278.3 h4.4 l-2.2,3.3 z" fill="#111"/>
<line x1="98.5" y1="275" x2="98.5" y2="285" stroke="#e6e6e6" stroke-width="1" />
<line x1="148.5" y1="275" x2="148.5" y2="284" stroke="#e0e0e0" stroke-width="1" />
<line x1="333.5" y1="275" x2="333.5" y2="284" stroke="#e0e0e0" stroke-width="1" />
<text x="99.3" y="283" font-size="6.81" fill="#111" font-weight="normal" text-anchor="start" textLength="38.7" lengthAdjust="spacing">Дата собы...</text>
<text x="150" y="283" font-size="6.8" fill="#111" font-weight="normal" text-anchor="start" textLength="74.7" lengthAdjust="spacing">Наименование события</text>
<text x="335.4" y="283" font-size="6.82" fill="#111" font-weight="normal" text-anchor="start" textLength="53.2" lengthAdjust="spacing">Контактное лицо</text>
<path d="M141,277.5 h4.2 l-1.7,2 v2.3 l-0.8,-0.7 v-1.6 z" fill="none" stroke="#6a6a6a" stroke-width="0.6"/>
<rect x="98" y="285" width="360" height="10" fill="#d9fbe5" stroke="none" stroke-width="1" rx="0" />
<line x1="91" y1="295.5" x2="458" y2="295.5" stroke="#dadada" stroke-width="1" />
<line x1="91" y1="306.5" x2="458" y2="306.5" stroke="#dadada" stroke-width="1" />
<line x1="148.5" y1="285" x2="148.5" y2="306" stroke="#c4c4c4" stroke-width="1" stroke-dasharray="1 1"/>
<line x1="333.5" y1="285" x2="333.5" y2="306" stroke="#c4c4c4" stroke-width="1" stroke-dasharray="1 1"/>
<path d="M93,287.2 v6.2 l3.6,-3.1 z" fill="#000"/>
<text x="99.3" y="293.5" font-size="6.8" fill="#111" font-weight="normal" text-anchor="start" textLength="47.4" lengthAdjust="spacing">23.06.2010 18:4</text>
<text x="150" y="293.5" font-size="6.82" fill="#111" font-weight="normal" text-anchor="start" textLength="126" lengthAdjust="spacing">Создать резервную копию базы данных</text>
<text x="335.4" y="293.5" font-size="6.93" fill="#111" font-weight="normal" text-anchor="start" textLength="34.3" lengthAdjust="spacing">Takida Soft</text>
<text x="99.3" y="304.4" font-size="6.8" fill="#111" font-weight="normal" text-anchor="start" textLength="47.4" lengthAdjust="spacing">23.06.2010 10:0</text>
<text x="150" y="304.4" font-size="6.8" fill="#111" font-weight="normal" text-anchor="start" textLength="74.7" lengthAdjust="spacing">Получить консультацию</text>
<text x="335.4" y="304.4" font-size="6.93" fill="#111" font-weight="normal" text-anchor="start" textLength="34.3" lengthAdjust="spacing">Takida Soft</text>
<rect x="458" y="275" width="10" height="141" fill="#eaeaea" stroke="none" stroke-width="1" rx="0" />
<path d="M461,282 l2,-2 l2,2 z" fill="#444"/>
<path d="M461,408.5 l2,2 l2,-2 z" fill="#444"/>
<rect x="458.5" y="285.5" width="9" height="79" fill="url(#gThumbV)" stroke="#9a9a9a" stroke-width="0.7" rx="1.5" />
<line x1="461" y1="322" x2="465" y2="322" stroke="#888" stroke-width="0.6" />
<line x1="461" y1="324" x2="465" y2="324" stroke="#888" stroke-width="0.6" />
<line x1="461" y1="326" x2="465" y2="326" stroke="#888" stroke-width="0.6" />
<rect x="91" y="416" width="367" height="10" fill="#ebebeb" stroke="none" stroke-width="1" rx="0" />
<line x1="91" y1="416.5" x2="458" y2="416.5" stroke="#f6f6f6" stroke-width="1" />
<path d="M95.6,421.2 l2.4,-2.2 v4.4 z" fill="#505050"/>
<path d="M454.2,421.2 l-2.4,-2.2 v4.4 z" fill="#505050"/>
<rect x="101.5" y="416.5" width="10" height="9" fill="url(#gThumbH)" stroke="#9a9a9a" stroke-width="0.7" rx="1.5" />
<rect x="458" y="416" width="10" height="10" fill="#f0f0f0" stroke="none" stroke-width="1" rx="0" />
<text x="475.5" y="281.0" font-size="6.6" fill="#1a1a1a" font-weight="normal" text-anchor="start" textLength="85.5" lengthAdjust="spacing">Simply Backup - утилита для</text>
<text x="475.5" y="288.95" font-size="6.75" fill="#1a1a1a" font-weight="normal" text-anchor="start" textLength="87.5" lengthAdjust="spacing">обслуживания базы данных</text>
<text x="475.5" y="296.9" font-size="6.6" fill="#1a1a1a" font-weight="normal" text-anchor="start" textLength="55.2" lengthAdjust="spacing">Simply Super CRM.</text>
<text x="475.5" y="312.8" font-size="6.62" fill="#1a1a1a" font-weight="normal" text-anchor="start" textLength="27" lengthAdjust="spacing">Режимы:</text>
<text x="475.5" y="328.7" font-size="6.84" fill="#1a1a1a" font-weight="normal" text-anchor="start" textLength="90.9" lengthAdjust="spacing">- Резервная копия: создание</text>
<text x="475.5" y="336.65" font-size="6.78" fill="#1a1a1a" font-weight="normal" text-anchor="start" textLength="97.4" lengthAdjust="spacing">резервной копии базы данных.</text>
<text x="475.5" y="344.6" font-size="6.71" fill="#1a1a1a" font-weight="normal" text-anchor="start" textLength="57.3" lengthAdjust="spacing">- Восстановление:</text>
<text x="475.5" y="352.55" font-size="6.81" fill="#1a1a1a" font-weight="normal" text-anchor="start" textLength="102.8" lengthAdjust="spacing">восстановление базы данных из</text>
<text x="475.5" y="360.5" font-size="6.84" fill="#1a1a1a" font-weight="normal" text-anchor="start" textLength="55.2" lengthAdjust="spacing">резервной копии.</text>
<text x="475.5" y="368.45" font-size="6.84" fill="#1a1a1a" font-weight="normal" text-anchor="start" textLength="85.5" lengthAdjust="spacing">- Проверка: проверка базы</text>
<text x="475.5" y="376.4" font-size="6.6" fill="#1a1a1a" font-weight="normal" text-anchor="start" textLength="85.5" lengthAdjust="spacing">данных на наличие ошибок.</text>
<text x="475.5" y="384.35" font-size="6.64" fill="#1a1a1a" font-weight="normal" text-anchor="start" textLength="82.3" lengthAdjust="spacing">- Скрипт: выполнение SQL</text>
<text x="475.5" y="392.3" font-size="6.84" fill="#1a1a1a" font-weight="normal" text-anchor="start" textLength="89.8" lengthAdjust="spacing">скриптов для модернизации</text>
<text x="475.5" y="400.25" font-size="6.74" fill="#1a1a1a" font-weight="normal" text-anchor="start" textLength="75.8" lengthAdjust="spacing">структуры базы данных.</text>
<rect x="5" y="429" width="590" height="12" fill="url(#gStatus)" stroke="none" stroke-width="1" rx="0" />
<line x1="5" y1="429.5" x2="595" y2="429.5" stroke="#d7d7d7" stroke-width="1" />
<line x1="62.5" y1="430" x2="62.5" y2="441" stroke="#d0ccc8" stroke-width="1" />
<line x1="343.7" y1="430" x2="343.7" y2="441" stroke="#d0ccc8" stroke-width="1" />
<text x="6.6" y="438.7" font-size="7.0" fill="#1a1a2a" font-weight="normal" text-anchor="start" textLength="41.8" lengthAdjust="spacing">Версия: 2.5.0</text>
<text x="65.5" y="438.7" font-size="7.36" fill="#1a1a2a" font-weight="normal" text-anchor="start" textLength="164.8" lengthAdjust="spacing">Пользователь: ADMIN(Администратор системы)</text>
<text x="256.7" y="438.7" font-size="7.0" fill="#1a1a2a" font-weight="normal" text-anchor="start" textLength="55" lengthAdjust="spacing">среда, 23.06.2010</text>
<text x="347.6" y="438.7" font-size="7.06" fill="#1a1a2a" font-weight="normal" text-anchor="start" textLength="66" lengthAdjust="spacing">База данных: simply</text>
<rect x="589" y="439" width="1" height="1" fill="#a8a8a8" stroke="none" stroke-width="1" rx="0" />
<rect x="591" y="439" width="1" height="1" fill="#a8a8a8" stroke="none" stroke-width="1" rx="0" />
<rect x="593" y="439" width="1" height="1" fill="#a8a8a8" stroke="none" stroke-width="1" rx="0" />
<rect x="591" y="437" width="1" height="1" fill="#a8a8a8" stroke="none" stroke-width="1" rx="0" />
<rect x="593" y="437" width="1" height="1" fill="#a8a8a8" stroke="none" stroke-width="1" rx="0" />
<rect x="593" y="435" width="1" height="1" fill="#a8a8a8" stroke="none" stroke-width="1" rx="0" />
</svg></body></html>
